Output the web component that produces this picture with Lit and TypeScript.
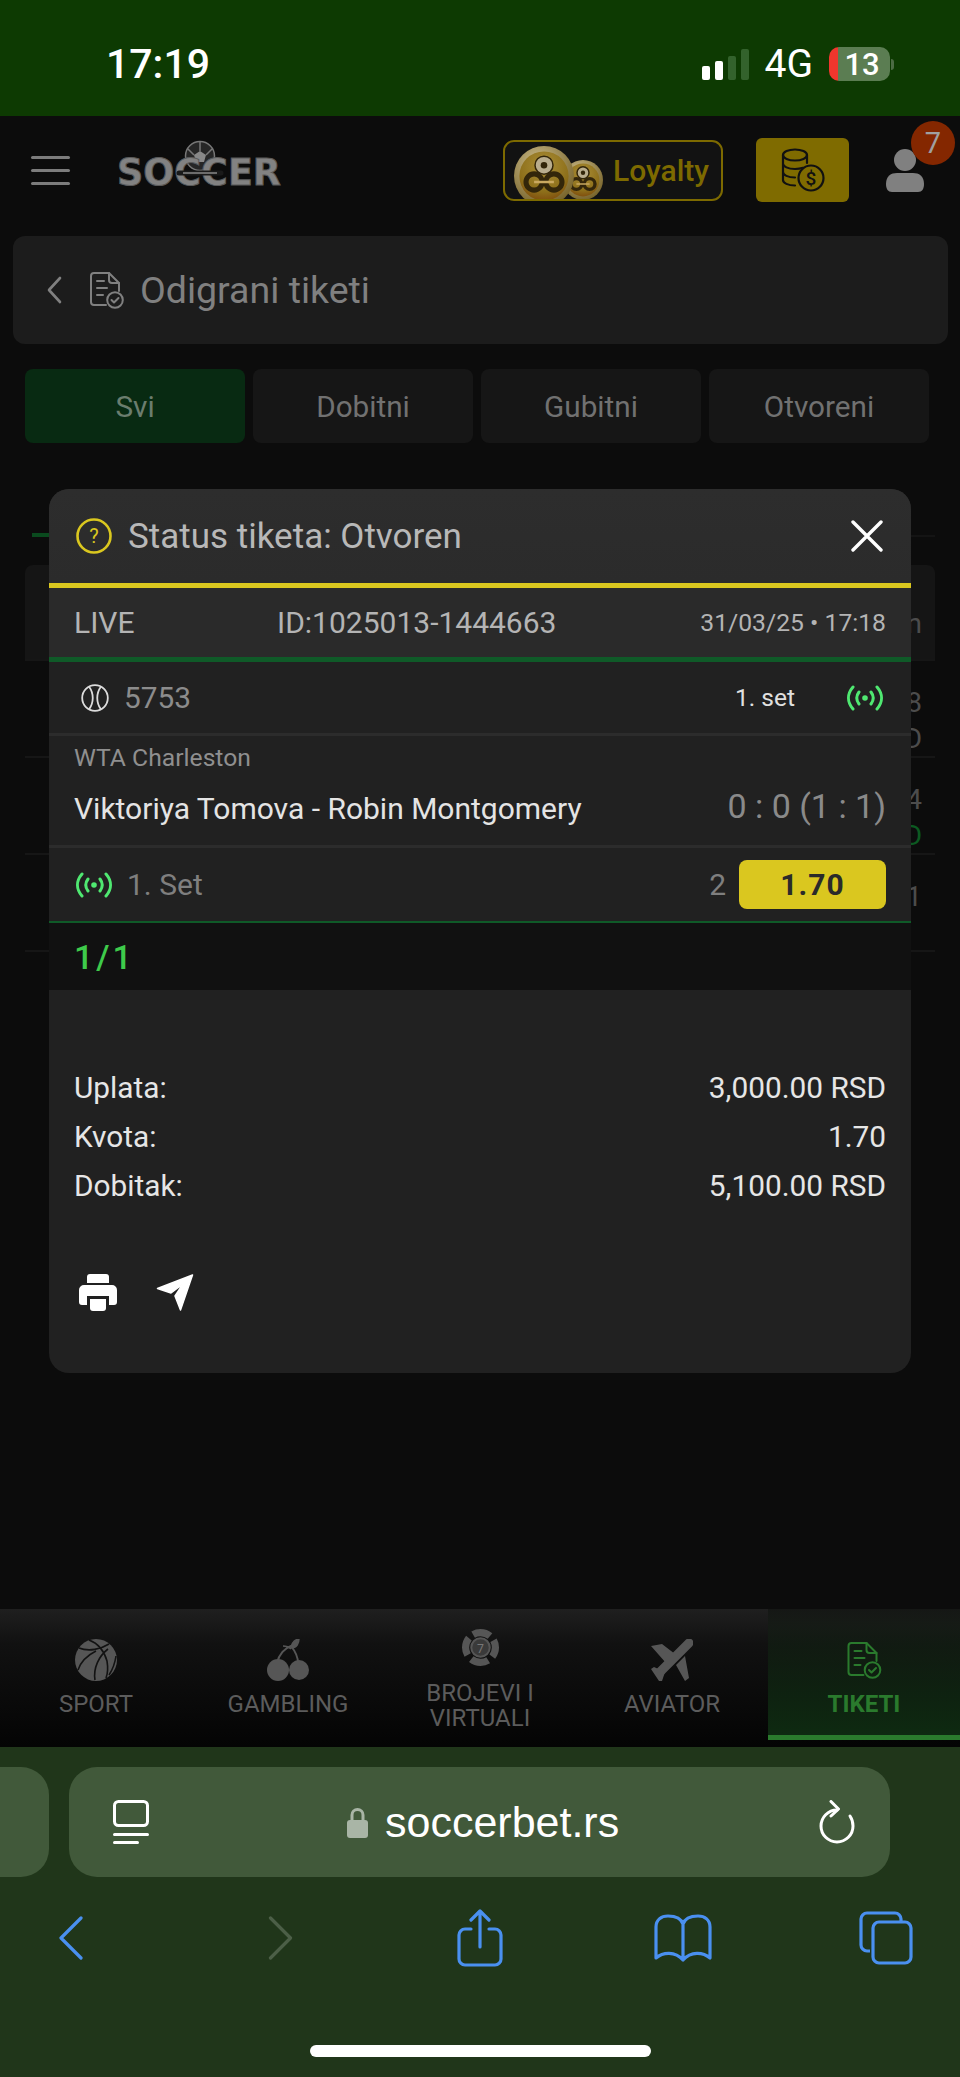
import { LitElement, html, css, svg } from "lit";
import { customElement } from "lit/decorators.js";

const docIcon = (cls: string) => html`<svg class=${cls} viewBox="0 0 34 37" fill="none" stroke="currentColor" stroke-width="2" stroke-linecap="round" stroke-linejoin="round">
  <path d="M16 33H4a3 3 0 0 1-3-3V4a3 3 0 0 1 3-3h15l10 10v8" />
  <path d="M19 1v7a3 3 0 0 0 3 3h7" />
  <path d="M7 9h7M7 16h10M7 23h6" />
  <circle cx="25" cy="28" r="7.8" />
  <path d="M21.5 28l2.5 2.5 4.5-4.5" />
</svg>`;

const liveIcon = html`<svg class="live" viewBox="0 0 36 26" fill="none" stroke="#4fe871" stroke-width="3" stroke-linecap="round">
  <path d="M6 2C0 9 0 17 6 24M12 7c-3 4-3 8 0 12M30 2c6 7 6 15 0 22M24 7c3 4 3 8 0 12" />
  <circle cx="18" cy="13" r="2.8" fill="#4fe871" stroke="none" />
</svg>`;

const coin = (cx: number, cy: number, r: number) => svg`
  <circle cx=${cx} cy=${cy} r=${r} fill="url(#coinEdge)" />
  <circle cx=${cx} cy=${cy} r=${r * 0.82} fill="url(#coinFace)" />
  <circle cx=${cx} cy=${cy - r * 0.36} r=${r * 0.3} fill="#b9ad8e" stroke="#33260a" stroke-width="1.5" />
  <circle cx=${cx} cy=${cy - r * 0.36} r=${r * 0.11} fill="#33260a" />
  <circle cx=${cx - r * 0.33} cy=${cy + r * 0.2} r=${r * 0.27} fill="none" stroke="#33260a" stroke-width=${r * 0.17} />
  <circle cx=${cx + r * 0.33} cy=${cy + r * 0.2} r=${r * 0.27} fill="none" stroke="#33260a" stroke-width=${r * 0.17} />
  <path d="M${cx - r * 0.33} ${cy + r * 0.2}H${cx + r * 0.33}" stroke="#c9a860" stroke-width=${r * 0.08} />
`;

const navIcons = {
  sport: html`<svg class="nav-icon" viewBox="0 0 42 42">
    <circle cx="21" cy="21" r="21" fill="#565656" />
    <path d="M4 9c10 4 22 1 30-4M14 1c8 3 15 10 18 21 1 6 1 12-1 17M20 41c-2-12 4-24 13-31M3 31c3-9 10-15 18-19M34 36c4-6 6-12 7-19" fill="none" stroke="#121212" stroke-width="1.6" />
  </svg>`,
  gambling: html`<svg class="nav-icon" viewBox="0 0 42 42">
    <path d="M10 24C12 15 18 9 24 7c4 5 7 11 7 17" fill="none" stroke="#565656" stroke-width="2" />
    <path d="M16 7c3 0 6 1 8 3M24 8C25 3 29 0 32 0c0 4-2 9-8 9z" fill="#565656" stroke="#565656" stroke-width="1.4" />
    <circle cx="11" cy="31" r="11" fill="#565656" />
    <circle cx="32" cy="31" r="10" fill="#565656" />
  </svg>`,
  virtual: html`<svg class="nav-icon roulette" viewBox="0 0 36 36">
    <circle cx="18" cy="18" r="14.5" fill="none" stroke="#565656" stroke-width="7" stroke-dasharray="17.5 5.3" stroke-dashoffset="8" />
    <circle cx="18" cy="18" r="9" fill="#3a3a3a" stroke="#565656" stroke-width="2" />
    <text x="18" y="23" text-anchor="middle" class="seven">7</text>
  </svg>`,
  aviator: html`<svg class="nav-icon" viewBox="0 0 42 42">
    <path d="M38 4L9 33" stroke="#565656" stroke-width="9" stroke-linecap="round" />
    <path d="M0 7l11-2 13 10-9 9zM25 26l9-9 4 22-4 3zM0 30l3-2 11 5-3 9H8z" fill="#565656" />
  </svg>`,
  tiketi: docIcon("nav-doc"),
};

@customElement("app-root")
export class AppRoot extends LitElement {
  static styles = css`
    :host {
      display: flex;
      flex-direction: column;
      width: 960px;
      height: 2077px;
      overflow: hidden;
      background: #0c0c0c;
      font-family: Roboto, "Liberation Sans", sans-serif;
    }

    /* ios status bar */
    .status {
      height: 116px;
      flex: none;
      background: #0d3a02;
      color: #fff;
      display: flex;
      align-items: center;
      padding: 12px 70px 0 106px;
      box-sizing: border-box;
    }
    .time {
      font-size: 41px;
      font-weight: 500;
      margin-right: auto;
    }
    .signal {
      display: flex;
      align-items: flex-end;
      gap: 5px;
      height: 31px;
      margin-right: 16px;
    }
    .signal i {
      width: 8px;
      background: #fff;
      border-radius: 2px;
    }
    .signal i.off {
      background: #33622c;
    }
    .net {
      font-size: 39px;
      margin-right: 16px;
    }
    .battery {
      width: 61px;
      height: 34px;
      border-radius: 10px;
      background: linear-gradient(90deg, #f0362d 0 9px, #5b7d52 9px);
      font-size: 31px;
      font-weight: 500;
      display: flex;
      align-items: center;
      justify-content: center;
      padding-left: 5px;
      box-sizing: border-box;
    }
    .nub {
      width: 3px;
      height: 11px;
      margin-left: 1px;
      margin-right: -4px;
      border-radius: 0 3px 3px 0;
      background: #4c6b44;
    }

    /* site header */
    .topbar {
      height: 108px;
      margin-bottom: 12px;
      flex: none;
      display: flex;
      align-items: center;
      padding-left: 31px;
    }
    .burger {
      width: 39px;
      display: flex;
      flex-direction: column;
      gap: 10px;
    }
    .burger i {
      height: 3px;
      background: #7c7c7c;
      border-radius: 2px;
    }
    .logo {
      position: relative;
      margin-left: 47px;
      width: 164px;
      font-family: "DejaVu Sans", sans-serif;
      font-weight: 700;
      font-size: 36.5px;
      line-height: 45px;
      color: #828282;
      -webkit-text-stroke: 1px #5a5a5a;
      white-space: nowrap;
      top: 2px;
    }
    .logo span {
      position: relative;
    }
    .logo svg {
      position: absolute;
      left: 0;
      top: -21px;
      width: 164px;
      height: 66px;
    }
    .loyalty {
      margin-left: 222px;
      width: 220px;
      height: 61px;
      box-sizing: border-box;
      border: 2px solid #7d6a00;
      border-radius: 11px;
      background: #121212;
      position: relative;
      overflow: hidden;
      color: #7d6a00;
      font-size: 30px;
      font-weight: 500;
      display: flex;
      align-items: center;
      padding-left: 108px;
    }
    .loyalty svg {
      position: absolute;
      left: 0;
      top: 0;
      width: 120px;
      height: 58px;
    }
    .wallet {
      margin-left: 33px;
      width: 93px;
      height: 64px;
      border-radius: 6px;
      background: #7f6b00;
      display: flex;
      align-items: center;
      justify-content: center;
    }
    .wallet svg {
      width: 44px;
      height: 44px;
    }
    .user {
      position: relative;
      margin-left: 37px;
      width: 38px;
      height: 44px;
    }
    .user svg {
      width: 38px;
      height: 44px;
      display: block;
    }
    .badge {
      position: absolute;
      left: 25px;
      top: -27px;
      width: 44px;
      height: 44px;
      border-radius: 50%;
      background: #842700;
      color: #a0a0a0;
      font-size: 29px;
      display: flex;
      align-items: center;
      justify-content: center;
    }

    .title-bar {
      height: 108px;
      flex: none;
      width: 935px;
      margin-left: 13px;
      box-sizing: border-box;
      background: #1c1c1c;
      border-radius: 12px;
      display: flex;
      align-items: center;
      padding-left: 34px;
      color: #808080;
      font-size: 37.5px;
    }
    .back {
      width: 15px;
      height: 28px;
      margin-right: 28px;
    }
    .title-doc {
      width: 34px;
      height: 37px;
      margin-right: 16px;
    }

    .tabs {
      flex: none;
      display: flex;
      gap: 8px;
      margin: 25px 0 0 25px;
    }
    .tab {
      width: 220px;
      height: 74px;
      border-radius: 8px;
      background: #161616;
      color: #717171;
      font-size: 29.7px;
      display: flex;
      align-items: center;
      justify-content: center;
    }
    .tab.on {
      background: #082a12;
      color: #6b7d6e;
    }

    /* page content behind the overlay */
    .main {
      flex: none;
      height: 1166px;
      position: relative;
    }
    .sub-line {
      margin: 92px 25px 0 32px;
      height: 2px;
      background: #141414;
      position: relative;
    }
    .sub-line i {
      position: absolute;
      left: 0;
      top: -2px;
      width: 17px;
      height: 4px;
      background: #0a4a1e;
    }
    .table {
      margin: 28px 0 0 25px;
      width: 910px;
      color: #4c4c4c;
      font-size: 28px;
      line-height: 33px;
      text-align: right;
    }
    .table div {
      height: 97px;
      box-sizing: border-box;
      border-bottom: 2px solid #161616;
      padding: 25px 13px 0 0;
      display: flex;
      flex-direction: column;
      gap: 3px;
    }
    .table div:first-child {
      height: 96px;
      padding-top: 42px;
      background: #151515;
      border-radius: 8px 8px 0 0;
    }
    .table .won {
      color: #0c5a22;
    }

    .modal {
      position: absolute;
      left: 49px;
      top: 46px;
      width: 862px;
      height: 884px;
      border-radius: 20px;
      overflow: hidden;
      background: #212121;
      display: flex;
      flex-direction: column;
    }
    .m-head {
      height: 94px;
      flex: none;
      background: linear-gradient(#2d2d2d, #2b2b2b);
      border-bottom: 5px solid #dac71f;
      display: flex;
      align-items: center;
      padding: 0 28px 0 27px;
      color: #b8b8b8;
      font-size: 35px;
    }
    .q {
      width: 36px;
      height: 36px;
      margin-right: 16px;
    }
    .close {
      width: 32px;
      height: 32px;
      margin-left: auto;
    }
    .m-live {
      height: 69px;
      flex: none;
      background: #2a2a2a;
      border-bottom: 5px solid #0f5a28;
      display: grid;
      grid-template-columns: 203px 1fr auto;
      align-items: center;
      padding: 0 25px;
      color: #b4b4b4;
      font-size: 30px;
    }
    .m-live .date {
      font-size: 24.7px;
    }
    .m-event {
      height: 71px;
      flex: none;
      border-bottom: 3px solid #2c2c2c;
      display: flex;
      align-items: center;
      padding: 0 28px 0 32px;
      color: #8c8c8c;
      font-size: 29.8px;
    }
    .tennis {
      width: 28px;
      height: 28px;
      margin-right: 15px;
    }
    .m-event .set {
      margin-left: auto;
      margin-right: 52px;
      color: #e0e0e0;
      font-size: 24.5px;
    }
    .live {
      width: 36px;
      height: 26px;
      flex: none;
    }
    .m-match {
      height: 112px;
      flex: none;
      box-sizing: border-box;
      border-bottom: 3px solid #2c2c2c;
      padding: 8px 25px 0;
    }
    .league {
      color: #8f8f8f;
      font-size: 24.7px;
      line-height: 28px;
    }
    .teams {
      display: flex;
      justify-content: space-between;
      align-items: center;
      margin-top: 16px;
      color: #e4e4e4;
      font-size: 30px;
    }
    .score {
      color: #8a8a8a;
      font-size: 34px;
      position: relative;
      top: -2px;
    }
    .m-bet {
      height: 73px;
      flex: none;
      display: flex;
      align-items: center;
      padding: 0 25px 0 27px;
      color: #7f7f7f;
      font-size: 30px;
      border-bottom: 2px solid #0f5a28;
    }
    .m-bet .live {
      margin-right: 15px;
    }
    .m-bet .pick {
      margin-left: auto;
      margin-right: 13px;
    }
    .odd {
      width: 147px;
      height: 49px;
      border-radius: 8px;
      background: #dac71f;
      color: #2a2a2a;
      font-weight: 700;
      letter-spacing: 1px;
      display: flex;
      align-items: center;
      justify-content: center;
    }
    .m-count {
      height: 67px;
      flex: none;
      background: #111;
      display: flex;
      align-items: center;
      padding: 0 25px;
      color: #3ecb4b;
      font-size: 34px;
      font-weight: 500;
      letter-spacing: 3px;
    }
    .sums {
      margin-top: 73px;
      padding: 0 25px;
      color: #e6e6e6;
      font-size: 29.8px;
    }
    .sums div {
      height: 49px;
      display: flex;
      justify-content: space-between;
      align-items: center;
    }
    .actions {
      margin-top: 64px;
      padding-left: 30px;
      display: flex;
      align-items: flex-start;
      gap: 39px;
    }
    .actions svg {
      width: 38px;
      height: 37px;
    }

    /* bottom navigation of the site */
    .nav {
      height: 138px;
      flex: none;
      display: grid;
      grid-template-columns: repeat(5, 192px);
      background: linear-gradient(#1f1f1f, #111 25%, #040404);
    }
    .nav-item {
      height: 131px;
      box-sizing: border-box;
      color: #5c5c5c;
      font-size: 24px;
      line-height: 25px;
      text-align: center;
      display: flex;
      flex-direction: column;
      align-items: center;
      padding-top: 30px;
    }
    .nav-icon {
      width: 42px;
      height: 42px;
      display: block;
      margin-bottom: 11px;
    }
    .nav-item.two {
      padding-top: 20px;
    }
    .nav-item.two .nav-icon {
      width: 37px;
      height: 37px;
      margin-bottom: 15px;
    }
    .seven {
      font-size: 12px;
      fill: #777;
      font-family: Roboto, sans-serif;
    }
    .nav-doc {
      width: 35px;
      height: 37px;
      margin: 3px 0 13px;
      display: block;
    }
    .nav-item.on {
      color: #2a7a2d;
      font-weight: 700;
      border-bottom: 5px solid #2a7a2d;
      background: linear-gradient(#151715, #12201380 20%, #0e2a11);
    }

    /* safari chrome */
    .browser {
      flex: none;
      height: 330px;
      background: #20361a;
      display: flex;
      flex-direction: column;
    }
    .url-row {
      display: flex;
      margin-top: 20px;
      gap: 20px;
      height: 110px;
      flex: none;
    }
    .stub {
      width: 49px;
      border-radius: 0 28px 28px 0;
      background: #41593a;
    }
    .url {
      width: 821px;
      border-radius: 28px;
      background: #41593a;
      display: flex;
      align-items: center;
      padding: 0 35px 0 44px;
      box-sizing: border-box;
      color: #fff;
      font-family: "Liberation Sans", sans-serif;
      font-size: 43px;
    }
    .url .tabs-ic {
      width: 36px;
      height: 44px;
    }
    .url .lock {
      width: 21px;
      height: 31px;
      margin-left: 198px;
      margin-right: 17px;
    }
    .url .reload {
      width: 36px;
      height: 44px;
      margin-left: auto;
    }
    .tools {
      height: 62px;
      margin-top: 30px;
      flex: none;
      display: flex;
      align-items: center;
    }
    .tools svg {
      flex: none;
    }
    .home {
      width: 341px;
      height: 12px;
      border-radius: 6px;
      background: #fff;
      margin: 76px auto 0;
      flex: none;
    }
  `;

  render() {
    const nav = [
      { label: "SPORT", icon: navIcons.sport },
      { label: "GAMBLING", icon: navIcons.gambling },
      { label: "BROJEVI I\nVIRTUALI", icon: navIcons.virtual, two: true },
      { label: "AVIATOR", icon: navIcons.aviator },
      { label: "TIKETI", icon: navIcons.tiketi, on: true },
    ];
    return html`
      <div class="status">
        <span class="time">17:19</span>
        <div class="signal">
          <i style="height:14px"></i><i style="height:19px"></i>
          <i class="off" style="height:24px"></i><i class="off" style="height:31px"></i>
        </div>
        <span class="net">4G</span>
        <span class="battery">13</span><span class="nub"></span>
      </div>

      <div class="topbar">
        <div class="burger"><i></i><i></i><i></i></div>
        <div class="logo">
          <svg viewBox="0 0 164 66">
            <circle cx="83" cy="27" r="14.5" fill="#262626" stroke="#777" stroke-width="1.5" />
            <path d="M83 22l6 4-2 7h-8l-2-7z" fill="#888" />
            <path d="M83 13v9M71 20l6 6M95 20l-6 6" stroke="#777" stroke-width="1.5" />
          </svg>
          <span>SOCCER</span>
          <svg viewBox="0 0 164 66">
            <path d="M62 44H104" stroke="#1a1a1a" stroke-width="5" stroke-linecap="round" />
            <path d="M66 44H100" stroke="#888" stroke-width="1.5" />
          </svg>
        </div>
        <div class="loyalty">
          <svg viewBox="0 0 120 58">
            <defs>
              <radialGradient id="coinEdge" cx="0.4" cy="0.3" r="0.8">
                <stop offset="0" stop-color="#cdbd8c" /><stop offset="1" stop-color="#6e5a20" />
              </radialGradient>
              <radialGradient id="coinFace" cx="0.5" cy="0.3" r="0.8">
                <stop offset="0" stop-color="#ab8f38" /><stop offset="0.65" stop-color="#8d6f1a" /><stop offset="1" stop-color="#7a3f08" />
              </radialGradient>
            </defs>
            ${coin(78, 38, 20)} ${coin(39, 34, 30)}
          </svg>
          Loyalty
        </div>
        <div class="wallet">
          <svg viewBox="0 0 44 44" fill="none" stroke="#111" stroke-width="2.2" stroke-linecap="round">
            <ellipse cx="14" cy="7" rx="12" ry="5.5" />
            <path d="M2 7v25c0 3 5 5.5 12 5.5M26 7v8M2 15.5c0 3 5 5.5 12 5.5 3 0 6-.5 8-1.2M2 24c0 3 5 5.500 12 5.500" />
            <circle cx="30" cy="30" r="12.500" fill="#7f6b00" />
            <text x="30" y="37" text-anchor="middle" fill="#111" stroke="none" font-size="19" font-weight="500">$</text>
          </svg>
        </div>
        <div class="user">
          <svg viewBox="0 0 38 44">
            <circle cx="19" cy="12" r="11" fill="#808080" />
            <path d="M0 36c0-8 5-11 11-11h16c6 0 11 3 11 11 0 5-2 8-6 8H6c-4 0-6-3-6-8z" fill="#808080" />
          </svg>
          <span class="badge">7</span>
        </div>
      </div>

      <div class="title-bar">
        <svg class="back" viewBox="0 0 15 28" fill="none" stroke="#808080" stroke-width="2.600" stroke-linecap="round" stroke-linejoin="round">
          <path d="M13 2L2 14l11 12" />
        </svg>
        ${docIcon("title-doc")} Odigrani tiketi
      </div>

      <div class="tabs">
        <div class="tab on">Svi</div>
        <div class="tab">Dobitni</div>
        <div class="tab">Gubitni</div>
        <div class="tab">Otvoreni</div>
      </div>

      <div class="main">
        <div class="sub-line"><i></i></div>
        <div class="table">
          <div>n</div>
          <div><span>8</span><span>D</span></div>
          <div><span>4</span><span class="won">D</span></div>
          <div><span>1</span></div>
        </div>

        <div class="modal">
          <div class="m-head">
            <svg class="q" viewBox="0 0 36 36" fill="none" stroke="#dac71f" stroke-width="2.600">
              <circle cx="18" cy="18" r="16.500" />
              <text x="18" y="25" text-anchor="middle" fill="#dac71f" stroke="none" font-size="20">?</text>
            </svg>
            Status tiketa: Otvoren
            <svg class="close" viewBox="0 0 32 32" stroke="#fff" stroke-width="3.400" stroke-linecap="round">
              <path d="M2 2l28 28M30 2L2 30" />
            </svg>
          </div>
          <div class="m-live">
            <span>LIVE</span><span>ID:1025013-1444663</span><span class="date">31/03/25 • 17:18</span>
          </div>
          <div class="m-event">
            <svg class="tennis" viewBox="0 0 28 28" fill="none" stroke="#dcdcdc" stroke-width="1.800">
              <circle cx="14" cy="14" r="12.800" />
              <path d="M8 2.500c5 7 5 16 0 23M20 2.500c-5 7-5 16 0 23" />
            </svg>
            5753
            <span class="set">1. set</span>
            ${liveIcon}
          </div>
          <div class="m-match">
            <div class="league">WTA Charleston</div>
            <div class="teams">
              <span>Viktoriya Tomova - Robin Montgomery</span>
              <span class="score">0 : 0 (1 : 1)</span>
            </div>
          </div>
          <div class="m-bet">
            ${liveIcon}
            <span>1. Set</span>
            <span class="pick">2</span>
            <span class="odd">1.70</span>
          </div>
          <div class="m-count">1/1</div>
          <div class="sums">
            <div><span>Uplata:</span><span>3,000.00 RSD</span></div>
            <div><span>Kvota:</span><span>1.70</span></div>
            <div><span>Dobitak:</span><span>5,100.00 RSD</span></div>
          </div>
          <div class="actions">
            <svg viewBox="0 0 38 37" fill="#fff">
              <path d="M11 0h16a3 3 0 0 1 3 3v6H8V3a3 3 0 0 1 3-3z" />
              <path d="M5 11h28a5 5 0 0 1 5 5v12a3 3 0 0 1-3 3h-5v-9H8v9H3a3 3 0 0 1-3-3V16a5 5 0 0 1 5-5z" />
              <path d="M11 25h16v9a3 3 0 0 1-3 3H14a3 3 0 0 1-3-3z" />
            </svg>
            <svg viewBox="0 0 38 37" fill="#fff" stroke="#fff" stroke-width="1.500" stroke-linejoin="round">
              <path d="M36.500 1L1.500 14.500l13.500 4.500L27 10 19 22l5.500 14z" />
            </svg>
          </div>
        </div>
      </div>

      <div class="nav">
        ${nav.map(
          (n) => html`<div class="nav-item ${n.on ? "on" : ""} ${n.two ? "two" : ""}">
            ${n.icon}
            ${n.label.split("\n").map((l) => html`<span>${l}</span>`)}
          </div>`
        )}
      </div>

      <div class="browser">
        <div class="url-row">
          <div class="stub"></div>
          <div class="url">
            <svg class="tabs-ic" viewBox="0 0 36 44" fill="none" stroke="#fff" stroke-width="3" stroke-linecap="round">
              <rect x="1.500" y="1.500" width="33" height="24" rx="4" />
              <path d="M1.500 34.500h33M1.500 42.500h23" />
            </svg>
            <svg class="lock" viewBox="0 0 21 31">
              <path d="M5 14V8a5.500 5.500 0 0 1 11 0v6" fill="none" stroke="#a9b5a6" stroke-width="3" />
              <rect x="0" y="13" width="21" height="18" rx="3" fill="#a9b5a6" />
            </svg>
            soccerbet.rs
            <svg class="reload" viewBox="0 0 36 44" fill="none" stroke="#fff" stroke-width="3" stroke-linecap="round" stroke-linejoin="round">
              <path d="M18 10A16 16 0 1 0 34 26c0-4-1-7-3-10" />
              <path d="M12 1.500L19.500 9 12 16" />
            </svg>
          </div>
        </div>
        <div class="tools">
          <svg style="margin-left:59px" width="24" height="44" viewBox="0 0 24 44" fill="none" stroke="#4a90f0" stroke-width="3.200" stroke-linecap="round" stroke-linejoin="round">
            <path d="M22 2L2 22l20 20" />
          </svg>
          <svg style="margin-left:185px" width="25" height="44" viewBox="0 0 24 44" fill="none" stroke="#4c5f47" stroke-width="3.200" stroke-linecap="round" stroke-linejoin="round">
            <path d="M2 2l20 20L2 42" />
          </svg>
          <svg style="margin-left:164px" width="46" height="58" viewBox="0 0 46 58" fill="none" stroke="#4a90f0" stroke-width="3.200" stroke-linecap="round" stroke-linejoin="round">
            <path d="M14 20H8a6 6 0 0 0-6 6v24a6 6 0 0 0 6 6h30a6 6 0 0 0 6-6V26a6 6 0 0 0-6-6h-6" />
            <path d="M23 38V2M14 11l9-9 9 9" />
          </svg>
          <svg style="margin-left:151px" width="58" height="48" viewBox="0 0 58 48" fill="none" stroke="#4a90f0" stroke-width="3.200" stroke-linecap="round" stroke-linejoin="round">
            <path d="M29 10C27 4 20 2 14 2 7 2 2 6 2 13v31c7-6 19-7 27 2 8-9 20-8 27-2V13c0-7-5-11-12-11-6 0-13 2-15 8zM29 10v36" />
          </svg>
          <svg style="margin-left:147px" width="54" height="54" viewBox="0 0 54 54" fill="none" stroke="#4a90f0" stroke-width="3.200" stroke-linejoin="round">
            <path d="M11 40H8a6 6 0 0 1-6-6V8a6 6 0 0 1 6-6h28a6 6 0 0 1 6 6v3" />
            <rect x="14" y="11" width="38" height="41" rx="6" />
          </svg>
        </div>
        <div class="home"></div>
      </div>
    `;
  }
}
